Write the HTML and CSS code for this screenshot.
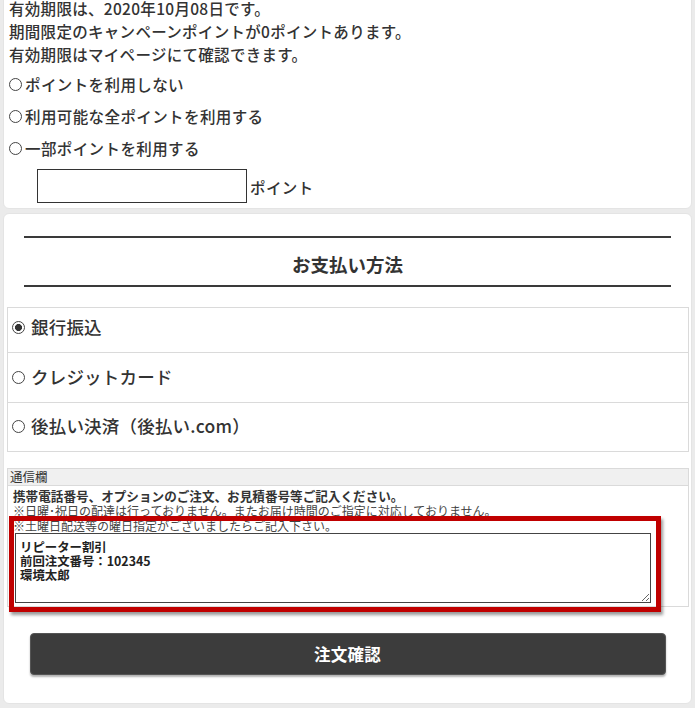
FILE: index.html
```html
<!DOCTYPE html>
<html lang="ja">
<head>
<meta charset="utf-8">
<title>お支払い方法</title>
<link rel="stylesheet" href="styles.css">
</head>
<body>
<div class="wrap">
  <section class="card card-points">
    <p class="info">有効期限は、2020年10月08日です。</p>
    <p class="info">期間限定のキャンペーンポイントが0ポイントあります。</p>
    <p class="info">有効期限はマイページにて確認できます。</p>
    <div class="point-opts">
      <label class="opt"><input type="radio" name="pt" class="radio"><span>ポイントを利用しない</span></label>
      <label class="opt"><input type="radio" name="pt" class="radio"><span>利用可能な全ポイントを利用する</span></label>
      <label class="opt"><input type="radio" name="pt" class="radio"><span>一部ポイントを利用する</span></label>
    </div>
    <div class="point-input">
      <input type="text" class="pt-box">
      <span class="pt-unit">ポイント</span>
    </div>
  </section>

  <section class="card card-pay">
    <h2 class="pay-title">お支払い方法</h2>
    <div class="pay-table">
      <label class="pay-row r1"><input type="radio" name="pay" class="radio" checked><span>銀行振込</span></label>
      <label class="pay-row r2"><input type="radio" name="pay" class="radio"><span>クレジットカード</span></label>
      <label class="pay-row r3"><input type="radio" name="pay" class="radio"><span>後払い決済（後払い.com）</span></label>
    </div>

    <div class="comm">
      <div class="comm-head">通信欄</div>
      <div class="comm-body">
        <p class="comm-lead">携帯電話番号、オプションのご注文、お見積番号等ご記入ください。</p>
        <p class="comm-note">※日曜･祝日の配達は行っておりません。またお届け時間のご指定に対応しておりません。</p>
        <p class="comm-note">※土曜日配送等の曜日指定がございましたらご記入下さい。</p>
        <textarea class="comm-text">リピーター割引
前回注文番号：102345
環境太郎</textarea>
      </div>
      <div class="highlight"></div>
    </div>

    <button type="button" class="submit">注文確認</button>
  </section>
</div>
</body>
</html>
```

FILE: styles.css
```css
* { box-sizing: border-box; }

html, body {
  margin: 0;
  padding: 0;
  background: #fff;
  font-family: "Noto Sans CJK JP", "Noto Sans", sans-serif;
  font-weight: 500;
  color: #333;
}

.wrap {
  width: 695px;
  margin-top: -10px;
  padding: 0 3px 4px;
  background: #ebebeb;
}

.card {
  background: #fff;
  border: 1px solid #e4e4e4;
  border-radius: 6px;
}

.card-points {
  padding: 6px 5px 5px;
  border-top-left-radius: 0;
  border-top-right-radius: 0;
}

.info {
  margin: 0;
  font-size: 15.5px;
  letter-spacing: 0.3px;
  line-height: 23px;
}

.point-opts {
  margin-top: 2px;
}

.opt {
  display: flex;
  align-items: center;
  height: 32px;
  font-size: 15.5px;
  letter-spacing: 0.4px;
}

.radio {
  appearance: none;
  -webkit-appearance: none;
  width: 13px;
  height: 13px;
  margin: 0 3px 0 0;
  border: 1px solid #444;
  border-radius: 50%;
  background: #fff;
  flex: none;
}

.radio:checked {
  background: radial-gradient(circle, #333 0 3.2px, #fff 3.8px);
}

.point-input {
  display: flex;
  align-items: center;
  margin-top: 5px;
}

.pt-box {
  width: 210px;
  height: 34px;
  margin-left: 28px;
  border: 1px solid #333;
  border-radius: 0;
  padding: 0;
}

.pt-unit {
  margin-left: 3px;
  margin-top: 2px;
  font-size: 15.5px;
  letter-spacing: 0.4px;
}

.card-pay {
  margin-top: 4px;
  padding: 22px 0 28px;
}

.pay-title {
  margin: 0 20px 0 20px;
  border-top: 2px solid #3a3a3a;
  border-bottom: 2px solid #3a3a3a;
  padding: 12px 0 7px;
  text-align: center;
  font-size: 18.5px;
  font-weight: bold;
  line-height: 28px;
  color: #333;
}

.pay-table {
  margin: 20px 2px 0 3px;
  border: 1px solid #dadada;
  display: flex;
  flex-direction: column;
}

.pay-row {
  display: flex;
  align-items: center;
  padding-left: 4px;
  font-size: 17.5px;
  line-height: 26px;
  letter-spacing: 0.2px;
}

.pay-row .radio {
  margin-right: 6px;
}

.pay-row.r1 { padding-top: 6px; padding-bottom: 12px; }
.pay-row.r2 { padding-top: 11px; padding-bottom: 12px; border-top: 1px solid #dadada; }
.pay-row.r3 { padding-top: 10px; padding-bottom: 12px; border-top: 1px solid #dadada; }

.comm {
  position: relative;
  margin: 16px 2px 0 3px;
  border: 1px solid #dadada;
}

.comm-head {
  height: 17px;
  padding-left: 2px;
  background: #f0f0f0;
  border-bottom: 1px solid #dadada;
  font-size: 12.5px;
  font-weight: 400;
  line-height: 16px;
  color: #333;
}

.comm-body {
  padding: 2px 0 3px 5px;
}

.comm-lead,
.comm-note {
  margin: 0;
  line-height: 15px;
  white-space: nowrap;
}

.comm-lead {
  font-size: 12.6px;
  font-weight: bold;
  color: #333;
}

.comm-note {
  font-size: 12px;
  font-weight: 400;
  color: #444;
}

.comm-text {
  display: block;
  width: 636px;
  height: 70px;
  margin: 0 0 0 2px;
  padding: 6px 4px;
  border: 1px solid #444;
  font-family: "Noto Sans CJK JP", "Noto Sans", sans-serif;
  font-size: 12.4px;
  font-weight: bold;
  line-height: 14px;
  color: #222;
  resize: both;
}

.highlight {
  position: absolute;
  left: 1px;
  top: 47px;
  width: 652px;
  height: 96px;
  border: 5px solid #c00000;
  box-shadow: 2px 3px 3px rgba(0, 0, 0, 0.4);
  pointer-events: none;
}

.submit {
  display: block;
  width: 636px;
  height: 42px;
  margin: 26px auto 0;
  background: #3c3c3c;
  border: 1px solid #555;
  border-radius: 4px;
  box-shadow: 0 2px 2px rgba(0, 0, 0, 0.3);
  color: #fff;
  font-family: "Noto Sans CJK JP", "Noto Sans", sans-serif;
  font-size: 16.5px;
  font-weight: bold;
  letter-spacing: 0.3px;
}
```
